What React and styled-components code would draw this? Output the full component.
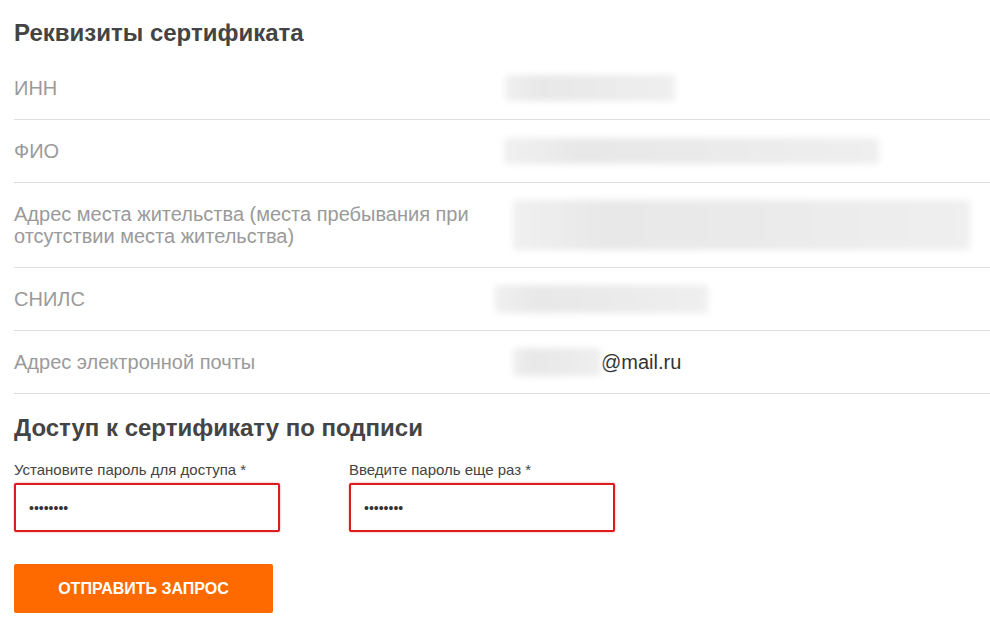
import React from 'react';
import styled, { createGlobalStyle } from 'styled-components'

const Global = createGlobalStyle`
  body {
    margin: 0;
    background: #fff;
    font-family: 'Liberation Sans', Arial, sans-serif;
  }
`

const Page = styled.div`
  padding: 18px 0 0 14px;
`

const Title = styled.h2`
  margin: 0 0 9px;
  font-size: 24px;
  line-height: 30px;
  font-weight: 700;
  color: #444;
`

const SubTitle = styled(Title)`
  margin: 19px 0 18px;
`

const Row = styled.div`
  display: grid;
  grid-template-columns: 490px 1fr;
  align-items: center;
  padding: 20px 0;
  border-bottom: 1px solid #ddd;
`

const Label = styled.div`
  font-size: 20px;
  line-height: 22px;
  color: #9a9a9a;
  padding-right: 14px;
`

const Value = styled.div`
  display: flex;
  align-items: center;
  margin-left: ${p => p.$shift || 0}px;
  font-size: 20px;
  line-height: 22px;
  color: #333;
`

const Blur = styled.div`
  width: ${p => p.$w}px;
  height: ${p => p.$h || 26}px;
  margin: ${p => (22 * (p.$lines || 1) - (p.$h || 26)) / 2}px 0;
  background: linear-gradient(90deg, #f0f0f0, #e8e8e8 20%, #ebebeb 60%, #efefef);
  filter: blur(3px);
  border-radius: 2px;
`

const Fields = styled.div`
  display: flex;
  gap: 69px;
`

const Field = styled.label`
  display: flex;
  flex-direction: column;
  gap: 4px;
`

const FieldLabel = styled.span`
  font-size: 15px;
  line-height: 18px;
  color: #444;
`

const Input = styled.input`
  box-sizing: border-box;
  width: 266px;
  height: 49px;
  padding: 0 13px;
  border: 2px solid #dc1c1c;
  border-radius: 2px;
  box-shadow: 0 0 2px rgba(220, 28, 28, 0.5);
  font-family: 'Liberation Sans', Arial, sans-serif;
  font-size: 14px;
  color: #333;
  outline: none;
`

const Button = styled.button`
  display: block;
  margin-top: 32px;
  width: 259px;
  height: 49px;
  border: none;
  border-radius: 2px;
  background: #ff6a00;
  color: #fff;
  font-family: 'Liberation Sans', Arial, sans-serif;
  font-size: 16px;
  font-weight: 700;
  cursor: pointer;
`

export default () => (
  <Page>
    <Global />
    <Title>Реквизиты сертификата</Title>
    <Row>
      <Label>ИНН</Label>
      <Value $shift={1}><Blur $w={170} /></Value>
    </Row>
    <Row>
      <Label>ФИО</Label>
      <Value><Blur $w={375} /></Value>
    </Row>
    <Row>
      <Label>Адрес места жительства (места пребывания при отсутствии места жительства)</Label>
      <Value $shift={9}><Blur $w={457} $h={50} $lines={2} /></Value>
    </Row>
    <Row>
      <Label>СНИЛС</Label>
      <Value $shift={-9}><Blur $w={213} $h={28} /></Value>
    </Row>
    <Row>
      <Label>Адрес электронной почты</Label>
      <Value $shift={9}><Blur $w={88} $h={28} />@mail.ru</Value>
    </Row>
    <SubTitle>Доступ к сертификату по подписи</SubTitle>
    <Fields>
      <Field>
        <FieldLabel>Установите пароль для доступа *</FieldLabel>
        <Input type="password" defaultValue="12345678" readOnly />
      </Field>
      <Field>
        <FieldLabel>Введите пароль еще раз *</FieldLabel>
        <Input type="password" defaultValue="12345678" readOnly />
      </Field>
    </Fields>
    <Button>ОТПРАВИТЬ ЗАПРОС</Button>
  </Page>
)
